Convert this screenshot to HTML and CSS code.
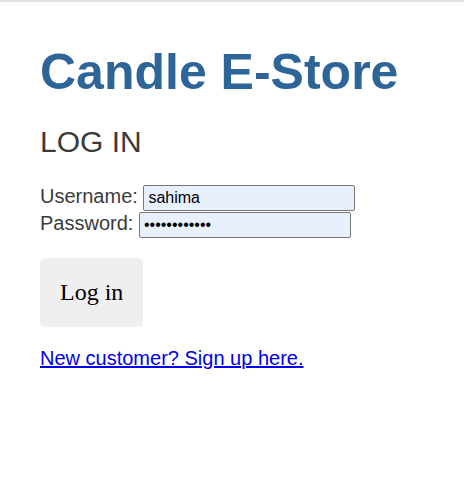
FILE: index.html
```html
<!DOCTYPE html>
<html lang="en">
<head>
<meta charset="utf-8">
<title>Candle E-Store - Log in</title>
<link rel="stylesheet" href="styles.css">
</head>
<body>
<div class="topbar"></div>
<main class="page">
  <h1 class="title">Candle E-Store</h1>
  <h2 class="subtitle">LOG IN</h2>
  <form class="login-form">
    <div class="fields">
      <div class="field"><label for="username">Username:</label> <input class="text-input" id="username" type="text" value="sahima"></div>
      <div class="field"><label for="password">Password:</label> <input class="text-input" id="password" type="password" value="abcdefghijkl"></div>
    </div>
    <button class="login-button" type="button">Log in</button>
  </form>
  <a class="signup-link" href="#">New customer? Sign up here.</a>
</main>
</body>
</html>
```

FILE: styles.css
```css
html, body {
  margin: 0;
  padding: 0;
  background: #ffffff;
}

body {
  font-family: "Liberation Sans", Arial, sans-serif;
}

.topbar {
  height: 2px;
  background: #e2e2e2;
}

.page {
  padding: 0 40px;
}

.title {
  margin: 41px 0 0;
  font-size: 50px;
  font-weight: bold;
  color: #2e6599;
  line-height: normal;
}

.subtitle {
  margin: 24px 0 0;
  font-size: 30px;
  font-weight: normal;
  color: #3b3b3b;
  line-height: normal;
}

.login-form {
  margin: 26px 0 0;
}

.fields {
  font-size: 20px;
  color: #3b3b3b;
}

.field {
  line-height: normal;
}

.field + .field {
  margin-top: 1px;
}

.text-input {
  box-sizing: border-box;
  width: 212px;
  height: 26px;
  margin: 0;
  padding: 1px 4px;
  border: 1px solid #767676;
  border-radius: 2px;
  background: #e8f0fe;
  font-family: "Liberation Sans", Arial, sans-serif;
  font-size: 16px;
  color: #000000;
  outline: none;
}

.login-button {
  display: block;
  margin: 20px 0 0;
  padding: 21px 20px;
  border: none;
  border-radius: 5px;
  background: #efefef;
  font-family: "Liberation Serif", "Times New Roman", serif;
  font-size: 24px;
  color: #000000;
  line-height: normal;
}

.signup-link {
  display: inline-block;
  margin-top: 20px;
  font-size: 20px;
  color: #0000ee;
  text-decoration: underline;
}
```
